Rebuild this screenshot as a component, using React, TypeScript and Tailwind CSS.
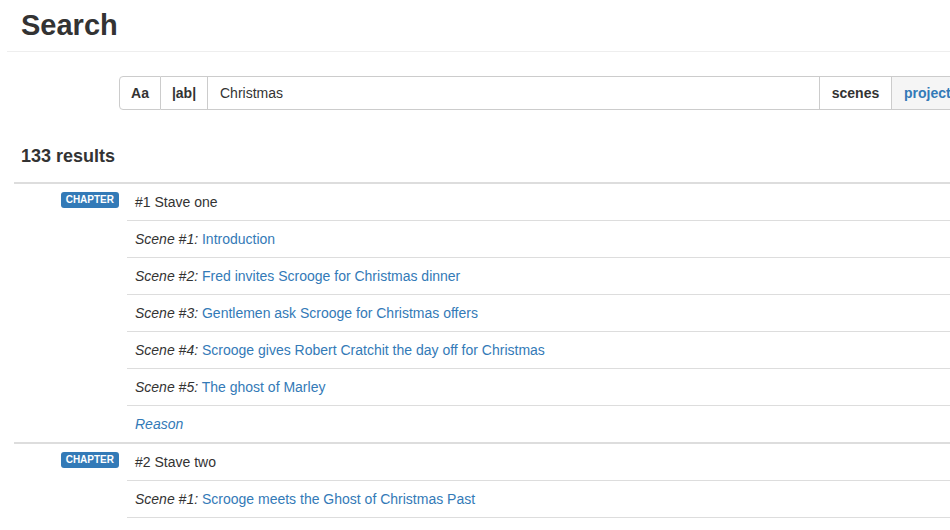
const chapters = [
  {
    title: "#1 Stave one",
    scenes: [
      "Introduction",
      "Fred invites Scrooge for Christmas dinner",
      "Gentlemen ask Scrooge for Christmas offers",
      "Scrooge gives Robert Cratchit the day off for Christmas",
      "The ghost of Marley",
    ],
    reason: true,
  },
  {
    title: "#2 Stave two",
    scenes: ["Scrooge meets the Ghost of Christmas Past"],
    reason: false,
  },
];

const App = () => {
  return (
    <div
      className="w-[950px] h-[530px] overflow-hidden bg-white text-[#333] text-sm"
      style={{ fontFamily: '"Liberation Sans", Arial, sans-serif' }}
    >
      <div className="ml-[7px] border-b border-[#eee] pt-[9px] pb-[9px]">
        <h1 className="pl-[14px] text-[29px] leading-[33px] font-bold">Search</h1>
      </div>

      <div className="ml-[119px] mt-[24px] flex h-[34px] leading-5">
        <span className="shrink-0 w-[42px] text-center py-[6px] border border-[#ccc] rounded-l font-bold bg-white">Aa</span>
        <span className="shrink-0 w-[47px] text-center py-[6px] border border-l-0 border-[#ccc] font-bold bg-white">|ab|</span>
        <div className="shrink-0 w-[612px] px-3 py-[6px] border border-l-0 border-[#ccc]">Christmas</div>
        <span className="shrink-0 w-[72px] text-center py-[6px] border border-l-0 border-[#ccc] font-bold bg-white">scenes</span>
        <span className="shrink-0 px-3 py-[6px] border border-l-0 border-[#ccc] font-bold bg-[#f5f5f5] text-[#337ab7]">
          project
        </span>
      </div>

      <h4 className="pl-[21px] mt-[36px] text-[18px] leading-5 font-bold">133 results</h4>

      <div className="ml-[14px] mt-[16px] w-[1000px]">
        {chapters.map((ch, i) => (
          <div key={i} className="grid grid-cols-[113px_1fr] border-t-2 border-[#ddd]">
            <div className="flex justify-end items-start pr-2 pt-2">
              <span className="bg-[#337ab7] text-white font-bold text-[10px] leading-4 h-4 px-[5px] rounded-[3px]">
                CHAPTER
              </span>
            </div>
            <div className={i === chapters.length - 1 ? "border-b border-[#ddd]" : ""}>
              <div className="px-2 py-2 leading-5">{ch.title}</div>
              {ch.scenes.map((s, j) => (
                <div key={j} className="px-2 py-2 leading-5 border-t border-[#ddd]">
                  <i>Scene #{j + 1}:</i> <a className="text-[#337ab7]">{s}</a>
                </div>
              ))}
              {ch.reason && (
                <div className="px-2 py-2 leading-5 border-t border-[#ddd]">
                  <i className="text-[#337ab7]">Reason</i>
                </div>
              )}
            </div>
          </div>
        ))}
      </div>
    </div>
  );
};

export default App;
